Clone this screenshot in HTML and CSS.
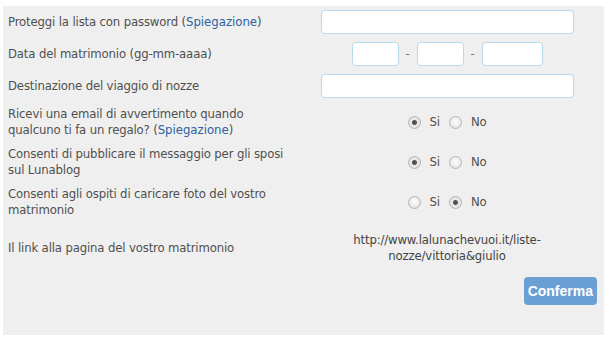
FILE: index.html
```html
<!DOCTYPE html>
<html lang="it">
<head>
  <meta charset="UTF-8">
  <title>Impostazioni lista nozze</title>
  <link rel="stylesheet" href="styles.css">
</head>
<body>
  <form class="settings">
    <div class="row">
      <div class="label">Proteggi la lista con password (<a href="#">Spiegazione</a>)</div>
      <div class="field"><input type="password" class="text-input wide"></div>
    </div>

    <div class="row">
      <div class="label">Data del matrimonio (gg-mm-aaaa)</div>
      <div class="field">
        <input type="text" class="text-input day">
        <span class="dash">-</span>
        <input type="text" class="text-input day">
        <span class="dash">-</span>
        <input type="text" class="text-input year">
      </div>
    </div>

    <div class="row">
      <div class="label">Destinazione del viaggio di nozze</div>
      <div class="field"><input type="text" class="text-input wide"></div>
    </div>

    <div class="row tall">
      <div class="label">Ricevi una email di avvertimento quando qualcuno ti fa un regalo? (<a href="#">Spiegazione</a>)</div>
      <div class="field">
        <label class="choice"><input type="radio" name="avviso" checked> Si</label>
        <label class="choice"><input type="radio" name="avviso"> No</label>
      </div>
    </div>

    <div class="row tall">
      <div class="label">Consenti di pubblicare il messaggio per gli sposi sul Lunablog</div>
      <div class="field">
        <label class="choice"><input type="radio" name="lunablog" checked> Si</label>
        <label class="choice"><input type="radio" name="lunablog"> No</label>
      </div>
    </div>

    <div class="row tall">
      <div class="label">Consenti agli ospiti di caricare foto del vostro matrimonio</div>
      <div class="field">
        <label class="choice"><input type="radio" name="foto"> Si</label>
        <label class="choice"><input type="radio" name="foto" checked> No</label>
      </div>
    </div>

    <div class="row tall link-row">
      <div class="label">Il link alla pagina del vostro matrimonio</div>
      <div class="field"><span class="url">http://www.lalunachevuoi.it/liste-nozze/vittoria&amp;giulio</span></div>
    </div>

    <div class="actions">
      <button type="button" class="confirm-button">Conferma</button>
    </div>
  </form>
</body>
</html>
```

FILE: styles.css
```css
body {
  margin: 0;
  padding: 0;
  background-color: #fff;
  font-family: "DejaVu Sans Condensed", "Liberation Sans", Arial, sans-serif;
  font-size: 13px;
  letter-spacing: -0.15px;
  color: #4f4f4f;
}

.settings {
  width: 601px;
  margin: 6px 0 0 3px;
  padding-bottom: 30px;
  background-color: #efefef;
}

.row {
  display: flex;
  align-items: center;
  padding: 4px 0;
  min-height: 24px;
}

.row.tall {
  min-height: 32px;
}

.link-row {
  margin-top: 6px;
}

.label {
  width: 282px;
  padding-left: 5px;
  line-height: 16px;
}

.label a {
  color: #2b62a0;
  text-decoration: none;
  letter-spacing: 0;
}

.field {
  flex: 1;
  display: flex;
  justify-content: center;
  align-items: center;
  line-height: 16px;
}

.text-input {
  box-sizing: border-box;
  height: 24px;
  border: 1px solid #b8daf0;
  border-radius: 4px;
  background: #fff;
  padding: 2px 5px;
  font: inherit;
}

.wide {
  width: 253px;
}

.day {
  width: 47px;
}

.year {
  width: 61px;
}

.dash {
  width: 18px;
  text-align: center;
  color: #777;
}

.choice {
  display: flex;
  align-items: center;
  margin-right: 9px;
}

.choice:last-child {
  margin-right: 0;
}

.choice input {
  appearance: none;
  -webkit-appearance: none;
  box-sizing: border-box;
  width: 13px;
  height: 13px;
  margin: 0 9px 0 0;
  border: 1px solid #b3b3b3;
  border-radius: 50%;
  background: radial-gradient(circle at 50% 40%, #fdfdfd 0%, #e6e6e6 70%, #d8d8d8 100%);
}

.choice input:checked {
  background: radial-gradient(circle, #4a4a4a 0, #555 2px, #e9e9e9 3px, #dcdcdc 100%);
}

.url {
  max-width: 215px;
  text-align: center;
  color: #444;
}

.actions {
  display: flex;
  justify-content: flex-end;
  padding: 9px 7px 0 0;
}

.confirm-button {
  height: 28px;
  padding: 0 4px;
  border: none;
  border-radius: 4px;
  background-color: #6a9fd4;
  color: #fff;
  font-family: "Liberation Sans", Arial, sans-serif;
  font-size: 14px;
  font-weight: bold;
  letter-spacing: 0;
  cursor: pointer;
}
```
